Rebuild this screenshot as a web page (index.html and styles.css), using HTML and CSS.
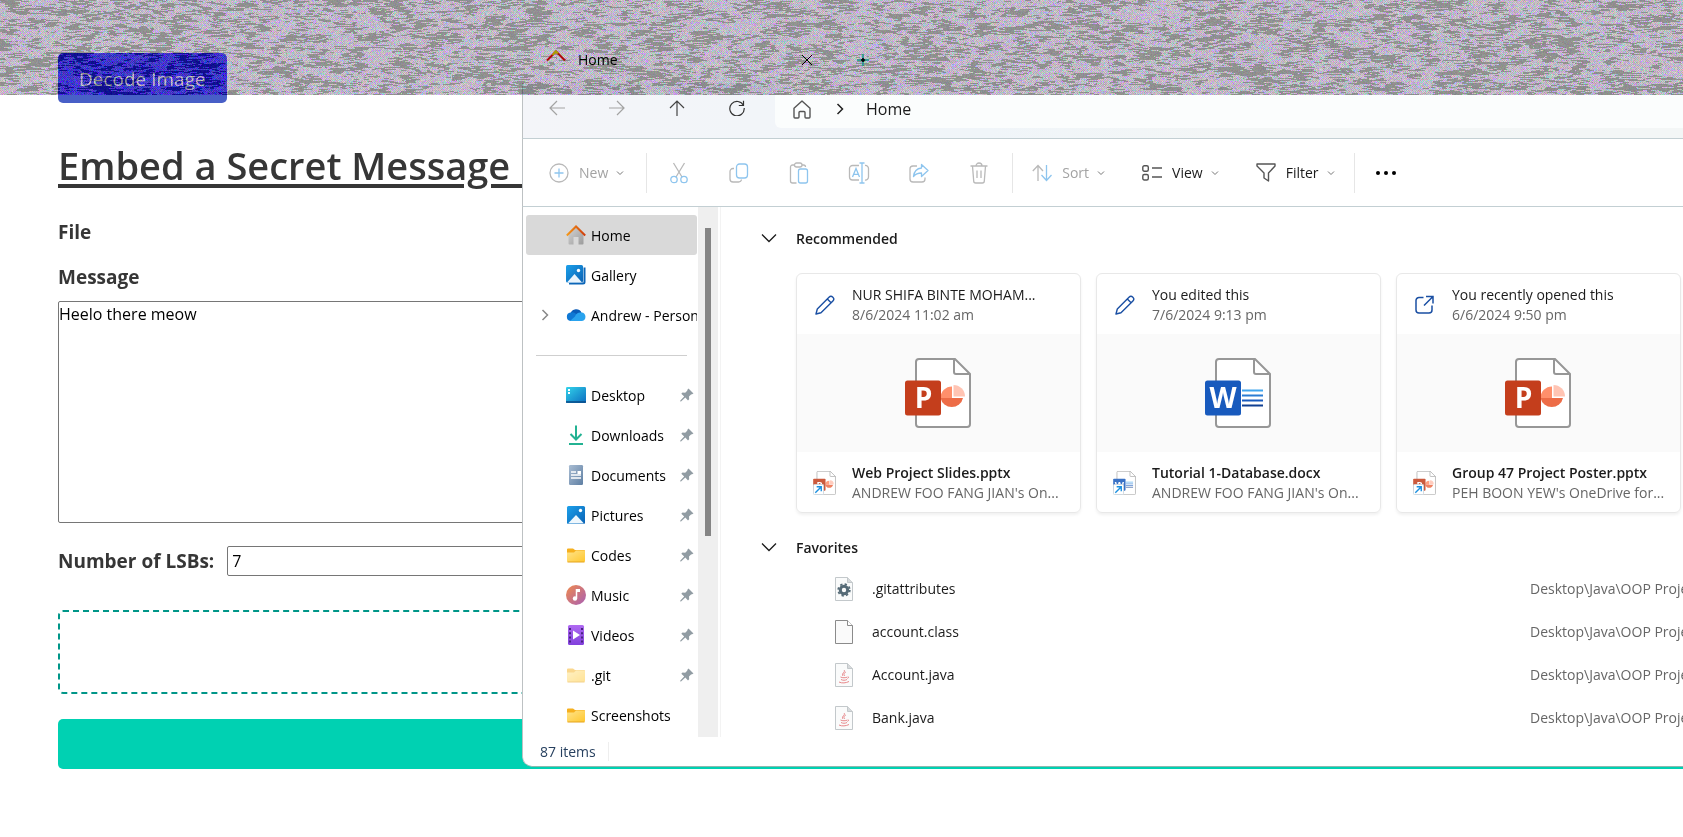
FILE: index.html
```html
<!DOCTYPE html>
<html lang="en">
<head>
<meta charset="utf-8">
<title>Steganography</title>
<link rel="stylesheet" href="styles.css">
</head>
<body>
<svg class="defs" aria-hidden="true">
  <defs>
    <linearGradient id="g-roof"><stop offset="0" stop-color="#f59a1b"/><stop offset="1" stop-color="#cf3c0c"/></linearGradient>
    <linearGradient id="g-wall" x2="1" y2="1"><stop offset="0" stop-color="#d4d4d4"/><stop offset="1" stop-color="#9b9b9b"/></linearGradient>
    <linearGradient id="g-blue" x2="1" y2="1"><stop offset="0" stop-color="#1ca0ea"/><stop offset="1" stop-color="#0a62b4"/></linearGradient>
    <linearGradient id="g-desk" x2="1" y2="1"><stop offset="0" stop-color="#33d3ea"/><stop offset="1" stop-color="#0b6dc0"/></linearGradient>
    <linearGradient id="g-docs" x2="1" y2="1"><stop offset="0" stop-color="#a9bdd3"/><stop offset="1" stop-color="#5f7fa3"/></linearGradient>
    <linearGradient id="g-fold" x2="1" y2="1"><stop offset="0" stop-color="#ffe48c"/><stop offset="1" stop-color="#ffc72e"/></linearGradient>
    <linearGradient id="g-music" x2="1" y2="1"><stop offset="0" stop-color="#f08a4c"/><stop offset="1" stop-color="#a85fb4"/></linearGradient>
    <linearGradient id="g-video" x2="0" y2="1"><stop offset="0" stop-color="#b06af2"/><stop offset="1" stop-color="#8140dc"/></linearGradient>
    <symbol id="chev-s" viewBox="0 0 8 8"><path d="M1 2.5l3 3 3-3" fill="none" stroke="currentColor"/></symbol>
    <symbol id="chev-d" viewBox="0 0 16 10"><path d="M1 1.5l7 7 7-7" fill="none" stroke="currentColor" stroke-width="1.3"/></symbol>
    <symbol id="pin" viewBox="0 0 14 14"><path d="M8.5.5l5 5-1.5.8-1 .2-2 2 .2 2.700-1.200 1.200-2.700-2.900L1 13.400H.3v-.8l3.900-4.200-2.900-2.700 1.200-1.200 2.700.2 2-2 .2-1z" fill="#919ca3"/></symbol>
    <symbol id="folder" viewBox="0 0 20 20"><path d="M1 4.500a1 1 0 0 1 1-1h5l2 1.500h9a1 1 0 0 1 1 1V10H1z" fill="#f6b01e"/><path d="M1 7.500h7l2-2h8a1 1 0 0 1 1 1V16a1 1 0 0 1-1 1H2a1 1 0 0 1-1-1z" fill="url(#g-fold)"/><path d="M1.500 17h17" stroke="#e5a41c"/></symbol>
    <symbol id="pencil" viewBox="0 0 20 20"><path d="M1 19l1.300-5L14 2.200a2.700 2.700 0 0 1 3.900 3.800L6 17.700zM12.300 4l3.800 3.800" fill="none" stroke="#1a4fa3" stroke-width="1.400" stroke-linejoin="round"/></symbol>
    <symbol id="ppt" viewBox="0 0 66 70">
      <path d="M14 1h36l15 15v50a3 3 0 0 1-3 3H14a3 3 0 0 1-3-3V4a3 3 0 0 1 3-3z" fill="#fff" stroke="#979797" stroke-width="2"/><path d="M49 1v13a2 2 0 0 0 2 2h14" fill="none" stroke="#979797" stroke-width="2"/>
      <path d="M47 28.500V40H35.500A11.500 11.500 0 0 1 47 28.500z" fill="#ff8f6b"/><path d="M35.500 40H58a11.500 11.500 0 0 1-22.500 0z" fill="#ed6c47"/><path d="M48.500 27A11.500 11.500 0 0 1 60 38.500H48.500z" fill="#ffc4b3"/><rect y="22.500" width="36" height="35" rx="2.500" fill="#c43e1c"/>
      <text x="18.500" y="50" text-anchor="middle" class="app-letter">P</text>
    </symbol>
    <symbol id="word" viewBox="0 0 66 70">
      <path d="M14 1h36l15 15v50a3 3 0 0 1-3 3H14a3 3 0 0 1-3-3V4a3 3 0 0 1 3-3z" fill="#fff" stroke="#979797" stroke-width="2"/><path d="M49 1v13a2 2 0 0 0 2 2h14" fill="none" stroke="#979797" stroke-width="2"/>
      <path d="M37 32.500h21" stroke="#41a5ee" stroke-width="2"/><path d="M37 37.500h21" stroke="#2b7cd3" stroke-width="2"/><path d="M37 42.500h21" stroke="#185abd" stroke-width="2"/><path d="M37 47.500h21" stroke="#103f91" stroke-width="2"/><rect y="22.500" width="36" height="35" rx="2.500" fill="#185abd"/>
      <text x="18" y="50" text-anchor="middle" class="app-letter">W</text>
    </symbol>
    <symbol id="shortcut" viewBox="0 0 12 12"><rect x=".5" y=".5" width="11" height="11" rx="1" fill="#fff" stroke="#ccd6df"/><path d="M2.500 9.500l6-6M4 3h5v5" fill="none" stroke="#1a8fe0" stroke-width="1.500"/></symbol>
    <symbol id="page" viewBox="0 0 18 24"><path d="M.5.5h12l5 5v18H.5z" fill="#fafbfb" stroke="#c3c8cb"/><path d="M12.500.5v5h5" fill="#d7dadc" stroke="#c3c8cb"/></symbol>
    <symbol id="java" viewBox="0 0 18 24"><use href="#page"/><path d="M9 7c2 2-3 3-1 6M11 9c-2 1-3 2-1 4M5.500 14c2 1 5 1 7 0M6 16.500c2 1 4 1 6 0M4 19c3 1.500 7 1 10-.5M13 13.500c1 .5.5 1.500-.5 2" fill="none" stroke="#e8898c"/></symbol>
  </defs>
</svg>

<main class="page">
  <button class="decode" type="button">Decode Image</button>
  <h1>Embed a Secret Message in</h1>
  <form class="form">
    <div class="file-label">File</div>
    <label class="msg-label" for="msg">Message</label>
    <textarea id="msg">Heelo there meow</textarea>
    <div class="lsb">
      <label for="lsb">Number of LSBs:</label>
      <input id="lsb" type="text" value="7">
    </div>
    <div class="dropzone"></div>
    <button class="embed" type="button" aria-label="Embed"></button>
  </form>
</main>

<section class="explorer" aria-label="File explorer">
  <div class="tabs">
    <svg class="tab-home" viewBox="0 0 20 20"><path d="M1 10.500L10 1.500l9 9" fill="none" stroke="#b00808" stroke-width="2"/><path d="M6.500 5l3.500-3.500 2 2" fill="none" stroke="#a8a000" stroke-width="2"/></svg>
    <span class="tab-title">Home</span>
    <button type="button" aria-label="Close tab"><svg width="12" height="12" viewBox="0 0 12 12"><path d="M1 1l10 10M11 1L1 11" stroke="#000"/></svg></button>
    <button class="plus" type="button" aria-label="New tab"><svg width="12" height="12" viewBox="0 0 12 12"><path d="M6 0v12M0 6h12" stroke="#129088" stroke-width="1.500"/><path d="M6 4v4M4 6h4" stroke="#000" stroke-width="1.500"/></svg></button>
  </div>
  <div class="nav">
    <button class="dim" type="button" aria-label="Back"><svg width="16" height="16" viewBox="0 0 16 16"><path d="M16 8H1M8 1L1 8l7 7" fill="none" stroke="currentColor" stroke-width="1.200"/></svg></button>
    <button class="dim" type="button" aria-label="Forward"><svg width="16" height="16" viewBox="0 0 16 16"><path d="M0 8h15M8 1l7 7-7 7" fill="none" stroke="currentColor" stroke-width="1.200"/></svg></button>
    <button type="button" aria-label="Up"><svg width="16" height="16" viewBox="0 0 16 16"><path d="M8 16V1M1 8l7-7 7 7" fill="none" stroke="#444" stroke-width="1.200"/></svg></button>
    <button type="button" aria-label="Refresh"><svg width="16" height="16" viewBox="0 0 16 16"><path d="M14.500 5.500A7.200 7.200 0 1 0 15.200 8M14.500.8v4.700H9.800" fill="none" stroke="#333" stroke-width="1.200"/></svg></button>
    <div class="address">
      <svg width="18" height="19" viewBox="0 0 18 19"><path d="M1 8.200L9 1l8 7.200V17a1 1 0 0 1-1 1h-3a1 1 0 0 1-1-1v-4.500a1 1 0 0 0-1-1H7a1 1 0 0 0-1 1V17a1 1 0 0 1-1 1H2a1 1 0 0 1-1-1z" fill="none" stroke="#555" stroke-width="1.400" stroke-linejoin="round"/></svg>
      <svg width="8" height="12" viewBox="0 0 8 12"><path d="M1.500 1l5 5-5 5" fill="none" stroke="#222" stroke-width="1.500"/></svg>
      <span>Home</span>
    </div>
  </div>
  <div class="commands">
    <button class="dim new" type="button"><svg width="20" height="20" viewBox="0 0 20 20" fill="none"><circle cx="10" cy="10" r="9" stroke="#b9b9b9" stroke-width="1.300"/><path d="M10 5.500v9M5.500 10h9" stroke="#8ec5ee" stroke-width="1.300"/></svg><span>New</span><svg width="8" height="8"><use href="#chev-s"/></svg></button>
    <i class="sep"></i>
    <div class="tools">
      <button type="button" aria-label="Cut"><svg width="20" height="22" viewBox="0 0 20 22" fill="none" stroke-width="1.300"><path d="M4.500 1l8.500 14M15.500 1L7 15" stroke="#b9b9b9"/><circle cx="5" cy="17.500" r="3.200" stroke="#8ec5ee"/><circle cx="15" cy="17.500" r="3.200" stroke="#8ec5ee"/></svg></button>
      <button type="button" aria-label="Copy"><svg width="20" height="20" viewBox="0 0 20 20" fill="none" stroke-width="1.300"><path d="M5 5.500H4a3 3 0 0 0-3 3V16a3 3 0 0 0 3 3h5.500a3 3 0 0 0 3-2.500" stroke="#b9b9b9"/><rect x="7.500" y="1" width="11" height="14" rx="3" stroke="#8ec5ee"/></svg></button>
      <button type="button" aria-label="Paste"><svg width="20" height="22" viewBox="0 0 20 22" fill="none" stroke-width="1.300"><path d="M5.500 3H3.500a2 2 0 0 0-2 2v14a2 2 0 0 0 2 2h4M13 3h1.500a2 2 0 0 1 2 2" stroke="#b9b9b9"/><rect x="5.500" y="1" width="7.500" height="4" rx="2" stroke="#b9b9b9"/><rect x="9.500" y="7" width="9" height="14" rx="2" stroke="#8ec5ee"/></svg></button>
      <button type="button" aria-label="Rename"><svg width="22" height="22" viewBox="0 0 22 22" fill="none" stroke-width="1.300"><path d="M11 3.500H4.500a3 3 0 0 0-3 3V15a3 3 0 0 0 3 3H11M17 3.500a3 3 0 0 1 3.500 3V15a3 3 0 0 1-3.500 3" stroke="#b9b9b9"/><path d="M4.500 15L8 6.500l3.500 8.500M5.800 12.300h4.500M11.500 1h5M11.500 21h5M14 1v20" stroke="#8ec5ee"/></svg></button>
      <button type="button" aria-label="Share"><svg width="20" height="20" viewBox="0 0 20 20" fill="none" stroke-width="1.300" stroke-linejoin="round"><path d="M8 3H4a3 3 0 0 0-3 3v10a3 3 0 0 0 3 3h9a3 3 0 0 0 3-3v-1.500" stroke="#b9b9b9"/><path d="M12.500 1.500l6.500 6-6.500 6V10C8.500 10 6.500 11 4.500 13.500c.5-4.500 3-8 8-8.500z" stroke="#8ec5ee"/></svg></button>
      <button type="button" aria-label="Delete"><svg width="20" height="22" viewBox="0 0 20 22" fill="none" stroke="#b9b9b9" stroke-width="1.300"><path d="M1.500 4h17M7 4a3 3 0 0 1 6 0M3.500 4l1.200 15a2 2 0 0 0 2 2h6.600a2 2 0 0 0 2-2l1.200-15M8 8.500v7.500M12 8.500v7.500"/></svg></button>
    </div>
    <i class="sep"></i>
    <div class="menus">
      <button class="dim" type="button"><svg width="20" height="18" viewBox="0 0 20 18" fill="none" stroke-width="1.300"><path d="M6 17V1.500M.8 7L6 1.500 11 7" stroke="#b9b9b9"/><path d="M14.500 1v15.500M9.500 11l5 5.500 5-5.500" stroke="#8ec5ee"/></svg><span>Sort</span><svg width="8" height="8"><use href="#chev-s"/></svg></button>
      <button type="button"><svg width="20" height="16" viewBox="0 0 20 16" fill="none" stroke="#555" stroke-width="1.400"><rect x=".8" y=".8" width="5.500" height="5.500" rx="1.500"/><rect x=".8" y="9.500" width="5.500" height="5.500" rx="1.500"/><path d="M10 3h10M10 12h10"/></svg><span>View</span><svg width="8" height="8"><use href="#chev-s"/></svg></button>
      <button type="button"><svg width="20" height="19" viewBox="0 0 20 19" fill="none" stroke="#555" stroke-width="1.400" stroke-linejoin="round"><path d="M1 1h18v2l-6.500 7v8l-4.500-3v-5L1 3z"/></svg><span>Filter</span><svg width="8" height="8"><use href="#chev-s"/></svg></button>
    </div>
    <i class="sep"></i>
    <button class="more" type="button" aria-label="More"><svg width="20" height="4" viewBox="0 0 20 4"><circle cx="2" cy="2" r="2"/><circle cx="10" cy="2" r="2"/><circle cx="18" cy="2" r="2"/></svg></button>
  </div>

  <div class="body">
    <nav class="side">
      <a class="item on" href="#"><svg viewBox="0 0 20 20"><path d="M2.500 9L10 2l7.500 7v9.500a1 1 0 0 1-1 1h-4V12h-5v7.500h-4a1 1 0 0 1-1-1z" fill="url(#g-wall)"/><path d="M.8 10.500L10 1.500l9.200 9" fill="none" stroke="url(#g-roof)" stroke-width="2"/></svg><span>Home</span></a>
      <a class="item" href="#"><svg viewBox="0 0 20 20"><path d="M18.500 2.500V17a1.500 1.500 0 0 1-1.500 1.500H3" fill="none" stroke="#0c66b8" stroke-width="2"/><rect width="17" height="17.500" rx="1.500" fill="url(#g-blue)"/><path d="M1 17.500l7.500-8.500 7.500 8.500z" fill="#e9f4fc"/><circle cx="12.500" cy="5.500" r="1.700" fill="#fff"/></svg><span>Gallery</span></a>
      <a class="item" href="#"><svg class="expand" viewBox="0 0 8 12"><path d="M1.500 1l5 5-5 5" fill="none" stroke="#888" stroke-width="1.500"/></svg><svg viewBox="0 0 20 20"><path d="M4.500 8.500A6 6 0 0 1 15.500 7.500L12 13z" fill="#0a5cb8"/><path d="M4.500 7.500a5 5 0 0 1 5 1l5 4-10 3.500A4.300 4.300 0 0 1 4.500 7.500z" fill="#0f78d4"/><path d="M9 11.500a6 6 0 0 1 6.500-4 4.300 4.300 0 0 1 .5 8.500H4z" fill="#2aa3ee"/></svg><span>Andrew - Personal</span></a>
      <hr>
      <a class="item" href="#"><svg viewBox="0 0 20 20"><rect y="2" width="20" height="16" rx="1.200" fill="url(#g-desk)"/><path d="M0 17h20" stroke="#0a4a86" stroke-width="1.500"/><path d="M2 4h2v2H2zM2 7h2v2H2z" fill="#fff"/></svg><span>Desktop</span><svg class="pin"><use href="#pin"/></svg></a>
      <a class="item" href="#"><svg viewBox="0 0 20 20"><path d="M10 .5v14M4.500 9l5.500 5.500L15.500 9M3 19h14" fill="none" stroke="#22b292" stroke-width="2"/></svg><span>Downloads</span><svg class="pin"><use href="#pin"/></svg></a>
      <a class="item" href="#"><svg viewBox="0 0 20 20"><rect x="3" width="14" height="20" rx="1.200" fill="url(#g-docs)"/><path d="M5 7h5M5 10h10M5 13h10" stroke="#fff" stroke-width="1.500"/><path d="M11.500 6H15v3h-3.500z" fill="#fff"/></svg><span>Documents</span><svg class="pin"><use href="#pin"/></svg></a>
      <a class="item" href="#"><svg viewBox="0 0 20 20"><rect x="1" y="1" width="18" height="18" rx="1.500" fill="url(#g-blue)"/><path d="M2 18.500l8-8.500 8 8.500z" fill="#eef7fd"/><circle cx="14.500" cy="5.500" r="1.700" fill="#fff"/></svg><span>Pictures</span><svg class="pin"><use href="#pin"/></svg></a>
      <a class="item" href="#"><svg><use href="#folder"/></svg><span>Codes</span><svg class="pin"><use href="#pin"/></svg></a>
      <a class="item" href="#"><svg viewBox="0 0 20 20"><circle cx="10" cy="10" r="10" fill="url(#g-music)"/><path d="M10.500 4v9" stroke="#fff" stroke-width="1.500"/><path d="M10 4h4v3h-4z" fill="#fff"/><circle cx="9" cy="13.500" r="2.200" fill="#fff"/></svg><span>Music</span><svg class="pin"><use href="#pin"/></svg></a>
      <a class="item" href="#"><svg viewBox="0 0 20 20"><rect x="2" width="16" height="20" rx="1.500" fill="url(#g-video)"/><path d="M4 3v15M16 3v15" stroke="#4a2480" stroke-width="2" stroke-dasharray="2 2.200"/><path d="M7 5.500l7 4.500-7 4.500z" fill="#fff"/></svg><span>Videos</span><svg class="pin"><use href="#pin"/></svg></a>
      <a class="item" href="#"><svg class="faded"><use href="#folder"/></svg><span>.git</span><svg class="pin"><use href="#pin"/></svg></a>
      <a class="item" href="#"><svg><use href="#folder"/></svg><span>Screenshots</span></a>
    </nav>
    <div class="track"><div class="thumb"></div></div>
    <div class="content">
      <h2><svg width="16" height="10"><use href="#chev-d"/></svg>Recommended</h2>
      <div class="cards">
        <article class="card">
          <div class="row"><svg class="act"><use href="#pencil"/></svg><div><p>NUR SHIFA BINTE MOHAM...</p><p class="sub">8/6/2024 11:02 am</p></div></div>
          <div class="preview"><svg width="66" height="70"><use href="#ppt"/></svg></div>
          <div class="row"><span class="mini"><svg class="doc"><use href="#ppt"/></svg><svg class="cut"><use href="#shortcut"/></svg></span><div><p class="name">Web Project Slides.pptx</p><p class="sub">ANDREW FOO FANG JIAN's On...</p></div></div>
        </article>
        <article class="card">
          <div class="row"><svg class="act"><use href="#pencil"/></svg><div><p>You edited this</p><p class="sub">7/6/2024 9:13 pm</p></div></div>
          <div class="preview"><svg width="66" height="70"><use href="#word"/></svg></div>
          <div class="row"><span class="mini"><svg class="doc"><use href="#word"/></svg><svg class="cut"><use href="#shortcut"/></svg></span><div><p class="name">Tutorial 1-Database.docx</p><p class="sub">ANDREW FOO FANG JIAN's On...</p></div></div>
        </article>
        <article class="card">
          <div class="row"><svg class="act" viewBox="0 0 20 20"><path d="M8.500 2.500H4a3 3 0 0 0-3 3V15a3 3 0 0 0 3 3h10a3 3 0 0 0 3-3v-4.500M11 1.500h7v7M18 1.500L9 10.500" fill="none" stroke="#1a4fa3" stroke-width="1.500"/></svg><div><p>You recently opened this</p><p class="sub">6/6/2024 9:50 pm</p></div></div>
          <div class="preview"><svg width="66" height="70"><use href="#ppt"/></svg></div>
          <div class="row"><span class="mini"><svg class="doc"><use href="#ppt"/></svg><svg class="cut"><use href="#shortcut"/></svg></span><div><p class="name">Group 47 Project Poster.pptx</p><p class="sub">PEH BOON YEW's OneDrive for...</p></div></div>
        </article>
      </div>
      <h2><svg width="16" height="10"><use href="#chev-d"/></svg>Favorites</h2>
      <ul class="files">
        <li><svg viewBox="0 0 18 24"><use href="#page"/><circle cx="9" cy="13" r="3.700" fill="none" stroke="#566b77" stroke-width="3"/><circle cx="9" cy="13" r="5.800" fill="none" stroke="#566b77" stroke-width="1.800" stroke-dasharray="2.300 2.250"/></svg><span>.gitattributes</span><span class="path">Desktop\Java\OOP Proje</span></li>
        <li><svg viewBox="0 0 18 24"><path d="M.5.5h12l5 5v18H.5z" fill="#fafafa" stroke="#8b8b8b"/><path d="M12.500.5v5h5" fill="#fff" stroke="#8b8b8b"/></svg><span>account.class</span><span class="path">Desktop\Java\OOP Proje</span></li>
        <li><svg><use href="#java"/></svg><span>Account.java</span><span class="path">Desktop\Java\OOP Proje</span></li>
        <li><svg><use href="#java"/></svg><span>Bank.java</span><span class="path">Desktop\Java\OOP Proje</span></li>
      </ul>
    </div>
  </div>
  <footer class="status"><span>87 items</span></footer>
</section>

<div class="dimmer"></div>
<canvas class="noise" id="noise"></canvas>
<script src="noise.js"></script>
</body>
</html>
```
FILE: styles.css
```css
* { box-sizing: border-box; }
html { overflow: hidden; background: #fff; }
body {
  margin: 0;
  position: relative;
  min-height: 100vh;
  overflow: hidden;
  background: #fff;
  color: #363636;
  font-family: "Open Sans", "Noto Sans", sans-serif;
}
button { font: inherit; color: inherit; border: 0; background: none; padding: 0; }
p, h1, h2, ul { margin: 0; padding: 0; }
svg { flex: none; display: block; }
.defs { position: absolute; width: 0; height: 0; }
.app-letter { font: 700 28px "Open Sans", sans-serif; fill: #fff; }

.page { padding: 53px 0 0 58px; }
.decode {
  display: block;
  height: 50px;
  padding: 2px 21px 0;
  border-radius: 5px;
  background: linear-gradient(#0000ff 42px, #485fc7 42px);
  color: #fff;
  font-size: 19px;
}
h1 {
  margin-top: 35px;
  font-size: 38px;
  line-height: 54px;
  font-weight: 600;
  white-space: nowrap;
  text-decoration: underline;
  text-decoration-thickness: 4px;
  text-underline-offset: 4px;
}
.form { display: flex; flex-direction: column; font-size: 19px; }
.file-label, .form label { font-weight: 700; line-height: 30px; }
.file-label { margin-top: 25px; }
.msg-label { margin-top: 15px; }
textarea, input {
  border: 1px solid #767676;
  border-radius: 2px;
  background: #fff;
  color: #000;
  font: 16px "Open Sans", sans-serif;
  outline: 0;
}
textarea { height: 222px; margin-top: 9px; padding: 1px 0; resize: none; }
.lsb { display: flex; align-items: center; gap: 13px; margin-top: 23px; }
.lsb input { flex: 1; height: 30px; padding: 0 4px; }
.dropzone { height: 84px; margin-top: 34px; border: 2px dashed #009688; border-radius: 5px; }
.embed { height: 50px; margin-top: 25px; background: #00d1b2; border-radius: 5px 0 0 5px; }

.explorer {
  position: absolute;
  top: 0;
  left: 522px;
  right: 0;
  border-radius: 0 0 0 10px;
  overflow: hidden;
  color: #1b1b1b;
  font-size: 14px;
}
.nav, .commands, .body, .status { border-left: 1px solid #bdc1c3; }
.commands, .body, .status { background: #fff; }
.tabs {
  display: flex;
  align-items: center;
  position: relative;
  z-index: 2;
  height: 83px;
  padding: 36px 0 0 24px;
  color: #000;
}
.tab-home { width: 20px; height: 20px; margin-right: 12px; }
.tab-title { width: 223px; }
.plus { margin-left: 44px; }
.nav {
  display: flex;
  align-items: center;
  gap: 44px;
  height: 56px;
  padding: 0 0 10px 26px;
  border-bottom: 1px solid #c3cfd3;
  background: linear-gradient(90deg, #f4f5f9, #f0f5f9 40%, #f3f6f6 60%);
}
.nav button { padding-top: 5px; }
.dim { color: #a3a3a3; }
.address {
  display: flex;
  align-items: center;
  flex: 1;
  height: 45px;
  margin-left: -14px;
  padding: 7px 0 0 18px;
  background: #fbfdfd;
  border-radius: 0 0 0 6px;
  font-size: 16px;
}
.address svg:nth-child(2) { margin: 0 22px 0 25px; }
.commands { display: flex; align-items: center; height: 68px; border-bottom: 1px solid #c3cfd3; }
.commands button { display: flex; align-items: center; }
.commands button span { margin: 0 8px 0 10px; }
.commands button > svg:last-child:not(:first-child) { color: #777; }
.sep { width: 1px; height: 40px; background: #e6e6e6; }
.new { margin: 0 22px 0 26px; }
.tools { display: flex; padding: 0 3px 0 2px; }
.tools button { width: 60px; justify-content: center; }
.menus { display: flex; gap: 37px; padding: 0 19px; }
.more { padding-left: 21px; }

.body { display: flex; height: 530px; }
.side { width: 175px; padding: 8px 1px 0 3px; overflow: hidden; }
.item {
  display: flex;
  align-items: center;
  position: relative;
  height: 40px;
  padding-left: 40px;
  border-radius: 3px;
  color: #000;
  text-decoration: none;
  white-space: nowrap;
  overflow: hidden;
}
.item svg { width: 20px; height: 20px; }
.item span { margin-left: 5px; flex: 1; }
.item .pin { width: 14px; height: 14px; margin-right: 3px; }
.item .expand { position: absolute; left: 15px; width: 8px; height: 12px; }
.on { background: #d9d9d9; }
.faded { opacity: .5; }
.side hr { height: 1px; margin: 20px 10px 19px 10px; border: 0; background: #cfcfcf; }
.track { width: 20px; padding: 21px 7px; background: #efefef; }
.thumb { height: 308px; background: #858585; }
.content { flex: 1; min-width: 0; margin-left: 2px; padding: 17px 0 0 40px; border-left: 1px solid #f3f3f3; }
h2 { display: flex; align-items: center; gap: 19px; height: 28px; font-size: 14px; font-weight: 600; }
.cards { display: grid; grid-template-columns: repeat(3, 1fr); gap: 15px; padding: 21px 2px 20px 35px; }
.card { border: 1px solid #e8e8e8; border-radius: 6px; box-shadow: 0 2px 3px #0000000f; overflow: hidden; }
.row { display: flex; align-items: center; height: 60px; padding: 2px 0 0 16px; line-height: 20px; white-space: nowrap; }
.act { width: 20px; height: 20px; margin: 0 17px 0 2px; }
.sub { color: #666; }
.name { font-weight: 600; }
.preview { display: flex; align-items: center; justify-content: center; height: 118px; padding-right: 2px; background: #fafafa; }
.mini { position: relative; width: 24px; height: 24px; margin-right: 15px; }
.mini .doc { width: 23px; height: 24px; opacity: .85; }
.mini .cut { position: absolute; left: 0; bottom: 0; width: 11px; height: 11px; }
.files { list-style: none; padding: 6px 0 0 74px; }
.files li { display: flex; align-items: center; height: 43px; white-space: nowrap; }
.files svg { width: 18px; height: 24px; margin-right: 19px; }
.files span { flex: 1; }
.files .path { flex: 0 0 153px; color: #666; overflow: hidden; }
.status {
  height: 30px;
  padding-left: 17px;
  border-bottom: 1px solid #8cb8ae;
  border-radius: 0 0 0 10px;
  line-height: 30px;
  color: #27405f;
}
.status span { padding-right: 12px; border-right: 1px solid #eee; }

.dimmer, .noise { position: absolute; top: 0; left: 0; width: 100%; height: 95px; pointer-events: none; }
.dimmer { background: #808080; mix-blend-mode: multiply; }
.noise { display: block; mix-blend-mode: plus-lighter; }
```
FILE: noise.js
```js
// Fills the top band with streaky colour noise that is added to what lies below.
const canvas = document.getElementById("noise");
const w = (canvas.width = canvas.clientWidth);
const h = (canvas.height = canvas.clientHeight);
const ctx = canvas.getContext("2d");
const img = ctx.createImageData(w, h);

let seed = 12345;
function rnd() {
  seed = (seed * 1664525 + 1013904223) >>> 0;
  return seed / 4294967296;
}

const cw = 12, ch = 4;
const cols = Math.ceil(w / cw) + 2;
const cells = Array.from({ length: cols * (Math.ceil(h / ch) + 2) }, rnd);

function blob(x, y) {
  const gx = Math.floor(x / cw), gy = Math.floor(y / ch);
  const fx = x / cw - gx, fy = y / ch - gy;
  const at = (i, j) => cells[(gy + j) * cols + gx + i];
  const top = at(0, 0) * (1 - fx) + at(1, 0) * fx;
  const low = at(0, 1) * (1 - fx) + at(1, 1) * fx;
  return top * (1 - fy) + low * fy;
}

for (let y = 0; y < h; y++) {
  let left = 0, bias = 0;
  for (let x = 0; x < w; x++) {
    if (left-- <= 0) {
      left = 2 + rnd() * 5;
      bias = (rnd() - 0.5) * 0.75;
    }
    const p = (y * w + x) * 4;
    let c, spread = 24;
    if (blob(x, y) + bias < 0.38) {
      c = [16, 16, 16];
    } else {
      c = (x + y) % 2 ? [102, 20, 102] : [32, 94, 36];
      if (rnd() < 0.12) c = [40, 50, 110];
      spread = 50;
    }
    for (let k = 0; k < 3; k++) img.data[p + k] = c[k] + (rnd() - 0.5) * spread;
    img.data[p + 3] = 255;
  }
}
ctx.putImageData(img, 0, 0);
```
